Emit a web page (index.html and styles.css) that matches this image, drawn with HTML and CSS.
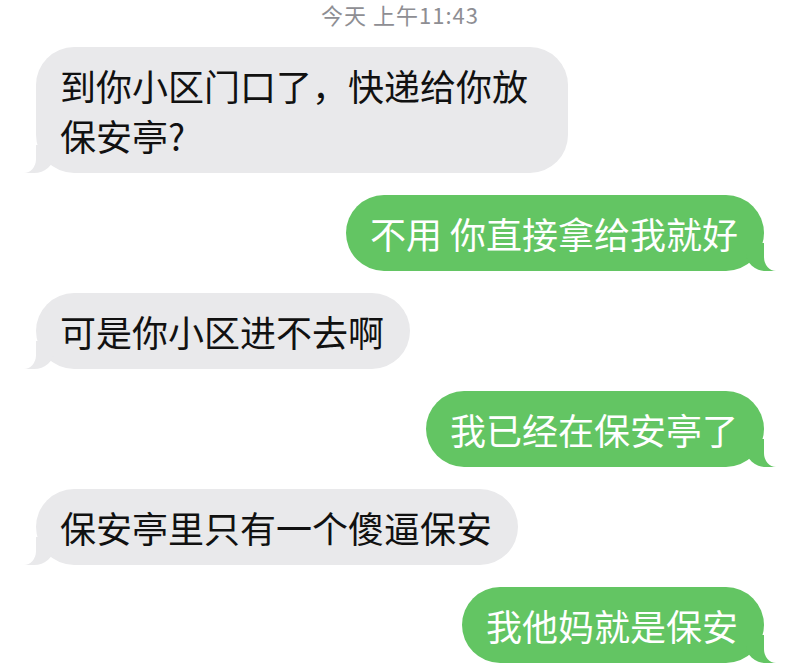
FILE: index.html
```html
<!DOCTYPE html>
<html>
<head>
  <meta charset="UTF-8">
  <title>信息</title>
  <link rel="stylesheet" href="styles.css">
</head>
<body>
  <div class="chat">
    <div class="time">今天 上午11:43</div>

    <div class="bubble them">到你小区门口了，快递给你放保安亭?</div>
    <div class="bubble me">不用 你直接拿给我就好</div>
    <div class="bubble them">可是你小区进不去啊</div>
    <div class="bubble me">我已经在保安亭了</div>
    <div class="bubble them">保安亭里只有一个傻逼保安</div>
    <div class="bubble me">我他妈就是保安</div>
  </div>
</body>
</html>
```

FILE: styles.css
```css
body {
  margin: 0;
  background-color: #fff;
  font-family: "Noto Sans CJK SC", "Noto Sans", sans-serif;
}
.chat {
  display: flex;
  flex-direction: column;
  gap: 22px;
  padding: 0 36px;
}
.time {
  font-size: 22px;
  line-height: 28px;
  letter-spacing: 1px;
  color: #8e8e93;
  text-align: center;
  margin-bottom: -3px;
}
.bubble {
  position: relative;
  max-width: 482px;
  padding: 13px 26px 13px 24px;
  font-size: 36px;
  line-height: 50px;
  border-radius: 38px;
}
.them {
  align-self: flex-start;
  background-color: #e9e9eb;
  color: #111;
}
.me {
  align-self: flex-end;
  background-color: #63c563;
  color: #fff;
}
/* tails */
.bubble:before,
.bubble:after {
  content: "";
  position: absolute;
  bottom: 0;
  height: 28px;
}
.them:before {
  left: -12px;
  width: 30px;
  background-color: #e9e9eb;
  border-bottom-right-radius: 20px 18px;
}
.them:after {
  left: -30px;
  width: 30px;
  background-color: #fff;
  border-bottom-right-radius: 12px 14px;
}
.me:before {
  right: -12px;
  width: 30px;
  background-color: #63c563;
  border-bottom-left-radius: 20px 18px;
}
.me:after {
  right: -30px;
  width: 30px;
  background-color: #fff;
  border-bottom-left-radius: 12px 14px;
}
```
